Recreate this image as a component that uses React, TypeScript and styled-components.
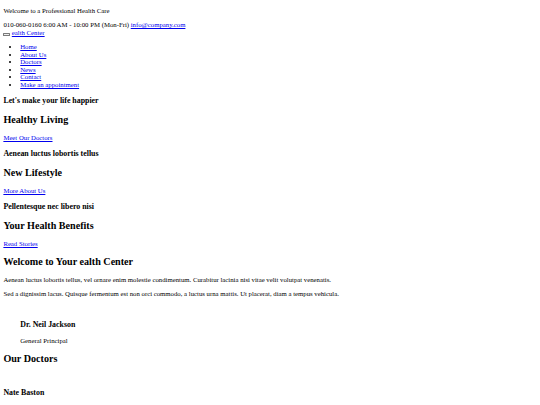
import React from 'react';
import styled, { createGlobalStyle } from 'styled-components';

// The whole page is an unstyled document rendered at ~0.42 scale,
// so the base font is 6.75px and every measure below is in em.
const GlobalStyle = createGlobalStyle`
	html {
		font-size: 6.75px;
		background: #ffffff;
	}
	body {
		margin: 0;
		font-family: "Liberation Serif", "Times New Roman", serif;
		font-size: 1rem;
		line-height: 1.125;
		color: #000000;
	}
`;

const Page = styled.div`
	display: flow-root;
	padding: 0 0.5em 0.5em;
`;

const Link = styled.a`
	color: #0000ee;
	text-decoration: underline;
	cursor: pointer;
`;

const Text = styled.p`
	margin: 1em 0;
`;

const ContactLine = styled.div``;

const Navbar = styled.nav``;

const Toggler = styled.button`
	display: inline-block;
	box-sizing: border-box;
	width: 6.75px;
	height: 2.6px;
	padding: 0;
	margin: 0;
	border: 0.6px solid #7a7a7a;
	border-radius: 0.5px;
	background: #efefef;
	vertical-align: baseline;
`;

const Menu = styled.ul`
	margin: 1em 0;
	padding-left: 2.5em;
	list-style: disc;
`;

const MenuItem = styled.li``;

const Kicker = styled.h3`
	font-size: 1.17em;
	font-weight: bold;
	line-height: 1.175;
	margin: 1em 0;
`;

const Title = styled.h2`
	font-size: 1.5em;
	font-weight: bold;
	margin: 0.83em 0;
`;

const Slide = styled.section``;

const About = styled.section``;

const Profile = styled.blockquote`
	margin: 1em 2.5em;
`;

// broken photo: an invisible image still takes one line box
const Photo = styled.div<{ $alt?: string }>`
	height: 1.125em;
`;

const Doctors = styled.section``;

const menu = ['Home', 'About Us', 'Doctors', 'News', 'Contact', 'Make an appointment'];

const slides = [
	{ kicker: "Let's make your life happier", title: 'Healthy Living', link: 'Meet Our Doctors' },
	{ kicker: 'Aenean luctus lobortis tellus', title: 'New Lifestyle', link: 'More About Us' },
	{ kicker: 'Pellentesque nec libero nisi', title: 'Your Health Benefits', link: 'Read Stories' },
];

export default function App() {
	return (
		<Page>
			<GlobalStyle />
			<header>
				<Text>Welcome to a Professional Health Care</Text>
				<ContactLine>
					010-060-0160 6:00 AM - 10:00 PM (Mon-Fri) <Link>info@company.com</Link>
				</ContactLine>
			</header>

			<Navbar>
				<Toggler aria-label="Toggle navigation" /> <Link>ealth Center</Link>
				<Menu>
					{menu.map((item) => (
						<MenuItem key={item}>
							<Link>{item}</Link>
						</MenuItem>
					))}
				</Menu>
			</Navbar>

			{slides.map((slide) => (
				<Slide key={slide.title}>
					<Kicker>{slide.kicker}</Kicker>
					<Title>{slide.title}</Title>
					<Text>
						<Link>{slide.link}</Link>
					</Text>
				</Slide>
			))}

			<About>
				<Title>Welcome to Your ealth Center</Title>
				<Text>
					Aenean luctus lobortis tellus, vel ornare enim molestie condimentum. Curabitur lacinia nisi vitae velit volutpat venenatis.
				</Text>
				<Text>
					Sed a dignissim lacus. Quisque fermentum est non orci commodo, a luctus urna mattis. Ut placerat, diam a tempus vehicula.
				</Text>
				<Profile>
					<Photo $alt="Dr. Neil Jackson" />
					<Kicker>Dr. Neil Jackson</Kicker>
					<Text>General Principal</Text>
				</Profile>
			</About>

			<Doctors>
				<Title>Our Doctors</Title>
				<Photo $alt="Nate Baston" />
				<Kicker>Nate Baston</Kicker>
			</Doctors>
		</Page>
	);
}
